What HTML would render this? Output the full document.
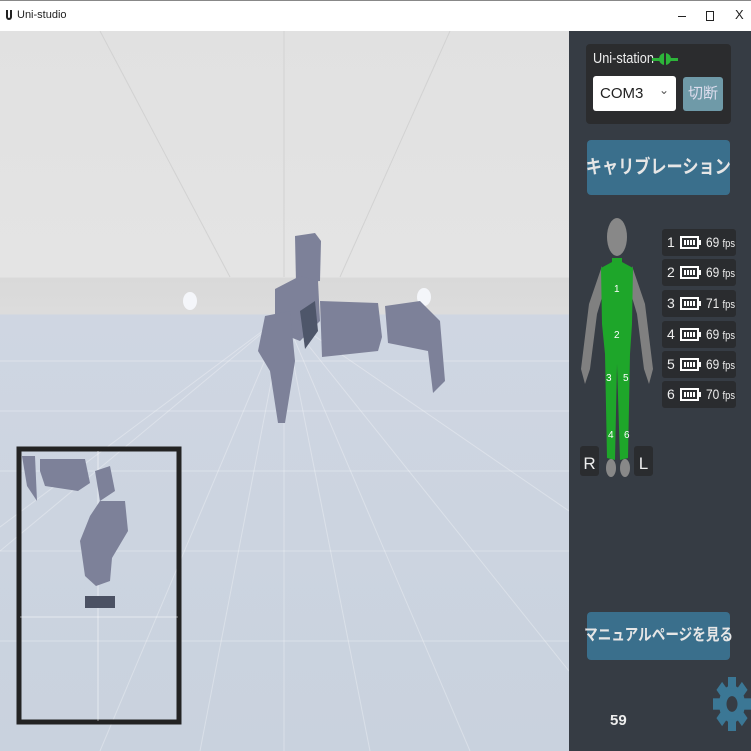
<!DOCTYPE html>
<html><head><meta charset="utf-8"><style>
*{margin:0;padding:0;box-sizing:border-box}
body{width:751px;height:751px;overflow:hidden;font-family:"Liberation Sans","Noto Sans CJK JP",sans-serif;background:#fff;position:relative;white-space:nowrap}
.abs{position:absolute}
#title{left:0;top:0;width:751px;height:31px;background:#fff;border-top:1px solid #888}
#vp{left:0;top:31px;width:569px;height:720px;overflow:hidden;background:linear-gradient(#e1e1e1 0,#e4e4e4 246px,#d9d9d9 247px,#dcdcdc 283px,#cfd6e2 284px,#c9d2de 720px)}
#panel{left:569px;top:31px;width:182px;height:720px;background:#363c44}
.row{position:absolute;left:662px;width:74px;height:27px;background:#2a2c2f;border-radius:3px;color:#eee;font-size:14px}
.row span{position:absolute;top:5px}
.sq{display:inline-block;transform:scaleX(.85);transform-origin:center}
</style></head><body>
<div id="title" class="abs">
 <div class="abs" style="left:6px;top:9px;width:6px;height:10px;border:2px solid #222;border-top:none;border-radius:0 0 3px 3px"></div>
 <div class="abs" style="left:17px;top:8px;font-size:11px;color:#222">Uni-studio</div>
 <div class="abs" style="left:678px;top:15px;width:8px;height:1px;background:#222"></div>
 <div class="abs" style="left:706px;top:10px;width:8px;height:10px;border:1px solid #222"></div>
 <div class="abs" style="left:735px;top:6px;font-size:13px;color:#222">X</div>
</div>
<div id="vp" class="abs">
<svg width="569" height="720" style="position:absolute;left:0;top:0">
 <g stroke="#ffffff" stroke-opacity=".3" stroke-width="1">
  <line x1="284" y1="284" x2="-300" y2="720"/><line x1="284" y1="284" x2="0" y2="520"/><line x1="284" y1="284" x2="100" y2="720"/><line x1="284" y1="284" x2="200" y2="720"/><line x1="284" y1="284" x2="284" y2="720"/><line x1="284" y1="284" x2="370" y2="720"/><line x1="284" y1="284" x2="470" y2="720"/><line x1="284" y1="284" x2="569" y2="640"/><line x1="284" y1="284" x2="569" y2="480"/>
  <line x1="0" y1="330" x2="569" y2="330"/><line x1="0" y1="380" x2="569" y2="380"/><line x1="0" y1="440" x2="569" y2="440"/><line x1="0" y1="520" x2="569" y2="520"/><line x1="0" y1="610" x2="569" y2="610"/>
 </g>
 <g stroke="#d2d2d2" stroke-width="1"><line x1="100" y1="0" x2="230" y2="246"/><line x1="450" y1="0" x2="340" y2="246"/><line x1="284" y1="0" x2="284" y2="246"/></g>
 <ellipse cx="190" cy="270" rx="7" ry="9" fill="#f4f6fa"/>
 <ellipse cx="424" cy="266" rx="7" ry="9" fill="#f4f6fa"/>
 <g fill="#7d8199">
  <path d="M295 205 L315 202 L321 210 L320 250 L296 252 Z"/>
  <path d="M275 258 L300 245 L318 250 L320 290 L300 310 L275 300 Z"/>
  <path d="M265 285 L290 280 L295 330 L285 392 L278 392 L270 340 L258 320 Z"/>
  <path d="M320 270 L378 272 L382 306 L378 320 L322 326 Z"/>
  <path d="M385 275 L420 270 L440 290 L445 350 L433 362 L428 320 L388 312 Z"/>
 </g>
 <path d="M300 280 L315 270 L318 300 L305 318 Z" fill="#4e566a"/>
 <rect x="19" y="418" width="160" height="273" fill="none" stroke="#232323" stroke-width="5"/>
 <g stroke="#fff" stroke-opacity=".5"><line x1="98" y1="420" x2="98" y2="690"/><line x1="20" y1="586" x2="178" y2="586"/></g>
 <g fill="#7d8199">
  <path d="M40 428 L85 428 L90 452 L78 460 L45 455 L40 440 Z"/>
  <path d="M22 425 L35 425 L37 470 L27 455 Z"/>
  <path d="M95 440 L110 435 L115 460 L100 470 Z"/>
  <path d="M100 470 L125 470 L128 500 L112 527 L110 550 L96 555 L85 545 L80 510 L90 485 Z"/>
 </g>
 <rect x="85" y="565" width="30" height="12" fill="#4b5163"/>
</svg>
</div>
<div id="panel" class="abs"></div>
<div class="abs" style="left:586px;top:44px;width:145px;height:80px;background:#2b2c2e;border-radius:4px"></div>
<div class="abs" style="left:593px;top:50px;color:#eee;font-size:15px;transform:scaleX(.85);transform-origin:left">Uni-station</div>
<svg class="abs" style="left:652px;top:52px" width="26" height="14"><rect x="0" y="6" width="26" height="3" fill="#2db43a"/><circle cx="13" cy="7" r="6" fill="#2db43a"/><rect x="12" y="1" width="2" height="12" fill="#2b2c2e"/></svg>
<div class="abs" style="left:593px;top:76px;width:83px;height:35px;background:#fff;border-radius:3px;font-size:15px;color:#222;padding:9px 0 0 7px">COM3<span style="position:absolute;left:66px;top:7px;font-size:12px;color:#555">⌄</span></div>
<div class="abs" style="left:683px;top:77px;width:40px;height:34px;background:#6f9aa8;border-radius:3px;color:#dde;font-size:15px;text-align:center;line-height:34px">切断</div>
<div class="abs" style="left:587px;top:140px;width:143px;height:55px;background:#3a6f8c;border-radius:4px;color:#e6e6e6;font-size:19px;font-weight:bold;text-align:center;line-height:55px"><span class="sq" style="margin-left:-20px;margin-right:-20px">キャリブレーション</span></div>
<svg class="abs" style="left:575px;top:214px" width="85" height="265">
 <ellipse cx="42" cy="23" rx="10" ry="19" fill="#888"/>
 <path d="M27 52 L14 90 L6 155 L10 170 L15 155 L22 100 L28 80 Z M57 52 L70 90 L78 155 L74 170 L69 155 L62 100 L56 80 Z" fill="#808080"/>
 <path d="M37 44 L47 44 L47 48 L58 54 L57 110 L55 140 L53 244 L45 246 L42 150 L40 246 L32 244 L30 140 L27 110 L26 54 L37 48 Z" fill="#1ea62a"/>
 <ellipse cx="36" cy="254" rx="5" ry="9" fill="#888"/><ellipse cx="50" cy="254" rx="5" ry="9" fill="#888"/>
 <g fill="#fff" font-size="10" font-family="Liberation Sans"><text x="39" y="78">1</text><text x="39" y="124">2</text><text x="31" y="167">3</text><text x="48" y="167">5</text><text x="33" y="224">4</text><text x="49" y="224">6</text></g>
</svg>
<div class="row" style="top:229px"><span style="left:5px">1</span><svg style="position:absolute;left:18px;top:7px" width="22" height="13"><rect x="1" y="1" width="17" height="11" fill="none" stroke="#fff" stroke-width="2"/><rect x="18" y="4" width="3" height="5" fill="#fff"/><g fill="#fff"><rect x="4" y="4" width="2" height="5"/><rect x="7" y="4" width="2" height="5"/><rect x="10" y="4" width="2" height="5"/><rect x="13" y="4" width="2" height="5"/></g></svg><span style="left:44px;transform:scaleX(.85);transform-origin:left">69 <small style="font-size:11px">fps</small></span></div>
<div class="row" style="top:259px"><span style="left:5px">2</span><svg style="position:absolute;left:18px;top:7px" width="22" height="13"><rect x="1" y="1" width="17" height="11" fill="none" stroke="#fff" stroke-width="2"/><rect x="18" y="4" width="3" height="5" fill="#fff"/><g fill="#fff"><rect x="4" y="4" width="2" height="5"/><rect x="7" y="4" width="2" height="5"/><rect x="10" y="4" width="2" height="5"/><rect x="13" y="4" width="2" height="5"/></g></svg><span style="left:44px;transform:scaleX(.85);transform-origin:left">69 <small style="font-size:11px">fps</small></span></div>
<div class="row" style="top:290px"><span style="left:5px">3</span><svg style="position:absolute;left:18px;top:7px" width="22" height="13"><rect x="1" y="1" width="17" height="11" fill="none" stroke="#fff" stroke-width="2"/><rect x="18" y="4" width="3" height="5" fill="#fff"/><g fill="#fff"><rect x="4" y="4" width="2" height="5"/><rect x="7" y="4" width="2" height="5"/><rect x="10" y="4" width="2" height="5"/><rect x="13" y="4" width="2" height="5"/></g></svg><span style="left:44px;transform:scaleX(.85);transform-origin:left">71 <small style="font-size:11px">fps</small></span></div>
<div class="row" style="top:321px"><span style="left:5px">4</span><svg style="position:absolute;left:18px;top:7px" width="22" height="13"><rect x="1" y="1" width="17" height="11" fill="none" stroke="#fff" stroke-width="2"/><rect x="18" y="4" width="3" height="5" fill="#fff"/><g fill="#fff"><rect x="4" y="4" width="2" height="5"/><rect x="7" y="4" width="2" height="5"/><rect x="10" y="4" width="2" height="5"/><rect x="13" y="4" width="2" height="5"/></g></svg><span style="left:44px;transform:scaleX(.85);transform-origin:left">69 <small style="font-size:11px">fps</small></span></div>
<div class="row" style="top:351px"><span style="left:5px">5</span><svg style="position:absolute;left:18px;top:7px" width="22" height="13"><rect x="1" y="1" width="17" height="11" fill="none" stroke="#fff" stroke-width="2"/><rect x="18" y="4" width="3" height="5" fill="#fff"/><g fill="#fff"><rect x="4" y="4" width="2" height="5"/><rect x="7" y="4" width="2" height="5"/><rect x="10" y="4" width="2" height="5"/><rect x="13" y="4" width="2" height="5"/></g></svg><span style="left:44px;transform:scaleX(.85);transform-origin:left">69 <small style="font-size:11px">fps</small></span></div>
<div class="row" style="top:381px"><span style="left:5px">6</span><svg style="position:absolute;left:18px;top:7px" width="22" height="13"><rect x="1" y="1" width="17" height="11" fill="none" stroke="#fff" stroke-width="2"/><rect x="18" y="4" width="3" height="5" fill="#fff"/><g fill="#fff"><rect x="4" y="4" width="2" height="5"/><rect x="7" y="4" width="2" height="5"/><rect x="10" y="4" width="2" height="5"/><rect x="13" y="4" width="2" height="5"/></g></svg><span style="left:44px;transform:scaleX(.85);transform-origin:left">70 <small style="font-size:11px">fps</small></span></div>
<div class="abs" style="left:580px;top:446px;width:19px;height:30px;background:#2a2c2f;border-radius:3px;color:#eee;font-size:17px;text-align:center;line-height:36px">R</div>
<div class="abs" style="left:634px;top:446px;width:19px;height:30px;background:#2a2c2f;border-radius:3px;color:#eee;font-size:17px;text-align:center;line-height:36px">L</div>
<div class="abs" style="left:587px;top:612px;width:143px;height:48px;background:#3a6f8c;border-radius:4px;color:#e6e6e6;font-size:16px;font-weight:bold;text-align:center;line-height:48px"><span class="sq" style="margin-left:-30px;margin-right:-30px">マニュアルページを見る</span></div>
<div class="abs" style="left:610px;top:712px;color:#eee;font-size:15px;font-weight:bold">59</div>
<svg class="abs" style="left:713px;top:677px" width="38" height="54" viewBox="0 0 38 38" preserveAspectRatio="none">
 <g fill="#3b7795" transform="translate(19 19)">
  <circle r="13"/>
  <g><rect x="-4" y="-19" width="8" height="8"/><rect x="-4" y="11" width="8" height="8"/><rect x="-19" y="-4" width="8" height="8"/><rect x="11" y="-4" width="8" height="8"/></g>
  <g transform="rotate(45)"><rect x="-4" y="-18" width="8" height="8"/><rect x="-4" y="10" width="8" height="8"/><rect x="-18" y="-4" width="8" height="8"/><rect x="10" y="-4" width="8" height="8"/></g>
 </g>
 <circle cx="19" cy="19" r="5.5" fill="#363c44"/>
</svg>
</body></html>
